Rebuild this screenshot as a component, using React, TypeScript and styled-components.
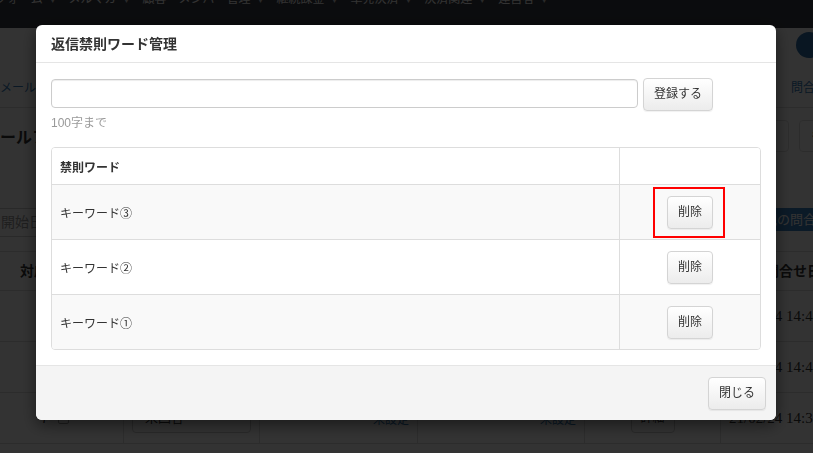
import React from "react";
import styled, { createGlobalStyle } from "styled-components";

const GlobalStyle = createGlobalStyle`
  html, body { margin: 0; padding: 0; }
  body {
    width: 813px;
    height: 453px;
    overflow: hidden;
    background: #fff;
    font-family: "Liberation Sans", "Noto Sans CJK JP", sans-serif;
    font-size: 12px;
    color: #333;
  }
  * { box-sizing: border-box; }
`;

/* ---------- underlying page ---------- */

const Page = styled.div`
  width: 880px;
  display: flex;
  flex-direction: column;
`;

const NavBar = styled.nav`
  height: 28px;
  background: #3a3d45;
  overflow: hidden;
`;

const NavList = styled.ul`
  list-style: none;
  margin: -8px 0 0 -5px;
  padding: 0;
  display: flex;
  color: #fff;
  font-size: 12px;
  line-height: 14px;
`;

const NavItem = styled.li`
  padding-right: 12px;
  white-space: nowrap;
`;

const Caret = styled.span`
  margin-left: 6px;
  font-size: 8px;
  color: #ccc;
`;

const TopTools = styled.div`
  height: 80px;
  border-bottom: 1px solid #ddd;
  display: flex;
  align-items: flex-end;
  padding: 0 53px 11px 0;
`;

const TabLink = styled.a`
  color: #337ab7;
  font-size: 12px;
  line-height: 16px;
`;

const Spacer = styled.div`
  flex: 1;
`;

const ToolIcon = styled.div`
  display: flex;
  flex-direction: column;
  align-items: center;
  gap: 22px;
  width: 36px;
`;

const Circle = styled.div`
  width: 26px;
  height: 26px;
  border-radius: 50%;
  background: #2f6ea8;
`;

const ToolLabel = styled.span`
  color: #337ab7;
  font-size: 12px;
  line-height: 16px;
  white-space: nowrap;
`;

const TitleRow = styled.div`
  height: 100px;
  display: flex;
  align-items: flex-start;
  padding-top: 12px;
  margin-left: -16px;
  gap: 10px;
  padding-right: 3px;
`;

const PageTitle = styled.h1`
  margin: 0;
  font-size: 16px;
  line-height: 36px;
  font-weight: bold;
  color: #333;
`;

const PageBtn = styled.div`
  height: 32px;
  padding: 0 12px;
  border: 1px solid #ddd;
  border-radius: 4px;
  font-size: 13px;
  font-weight: bold;
  line-height: 30px;
  color: #333;
  white-space: nowrap;
`;

const FilterRow = styled.div`
  height: 43px;
  display: flex;
  align-items: flex-start;
  margin-left: -40px;
  padding-right: 31px;
`;

const DateInput = styled.div`
  width: 120px;
  height: 29px;
  border: 1px solid #ccc;
  border-radius: 4px;
  color: #999;
  font-size: 14px;
  line-height: 27px;
  padding-left: 40px;
  white-space: nowrap;
`;

const PrimaryBtn = styled.div`
  height: 23px;
  padding: 0 20px;
  background: #3a80c0;
  color: #fff;
  border-radius: 3px;
  font-size: 13px;
  line-height: 23px;
  white-space: nowrap;
`;

const DataTable = styled.div`
  display: grid;
  grid-template-columns: 123px 136px 158px 167px 136px 160px;
  border-top: 1px solid #ddd;
`;

const HeadCell = styled.div<{ $center?: boolean }>`
  height: 39px;
  border-bottom: 1px solid #ddd;
  font-weight: bold;
  font-size: 14px;
  line-height: 38px;
  padding-left: ${(p) => (p.$center ? "0" : "20px")};
  text-align: ${(p) => (p.$center ? "center" : "left")};
  white-space: nowrap;
`;

const Cell = styled.div<{ $align?: string }>`
  height: 51px;
  border-bottom: 1px solid #ddd;
  border-left: 1px solid #ddd;
  display: flex;
  align-items: center;
  justify-content: ${(p) => p.$align || "flex-start"};
  padding: 0 8px;
  white-space: nowrap;
`;

const NumCell = styled(Cell)`
  border-left: none;
  padding-left: 41px;
  gap: 10px;
  font-size: 13px;
`;

const Check = styled.span`
  width: 11px;
  height: 11px;
  border: 1px solid #999;
  border-radius: 2px;
`;

const StatusSelect = styled.div`
  width: 119px;
  height: 30px;
  border: 1px solid #ccc;
  border-radius: 4px;
  padding-left: 12px;
  line-height: 28px;
  font-size: 13px;
`;

const UnsetLink = styled.a`
  color: #337ab7;
  font-size: 12px;
`;

const SmallBtn = styled.div`
  width: 44px;
  height: 30px;
  border: 1px solid #ccc;
  border-radius: 4px;
  text-align: center;
  line-height: 28px;
  font-size: 12px;
`;

const DateText = styled.span`
  font-family: "Liberation Serif", serif;
  font-size: 15px;
`;

/* ---------- modal ---------- */

const Backdrop = styled.div`
  position: fixed;
  inset: 0;
  background: rgba(0, 0, 0, 0.8);
`;

const ModalLayer = styled.div`
  position: fixed;
  inset: 0;
`;

const Dialog = styled.div`
  width: 740px;
  margin: 25px 0 0 36px;
  background: #fff;
  border-radius: 6px;
  box-shadow: 0 5px 15px rgba(0, 0, 0, 0.5);
  overflow: hidden;
`;

const DialogHeader = styled.div`
  height: 38px;
  border-bottom: 1px solid #e5e5e5;
  padding: 0 15px;
  display: flex;
  align-items: center;
`;

const DialogTitle = styled.h4`
  margin: 0;
  font-size: 14px;
  font-weight: bold;
  line-height: 20px;
  color: #333;
`;

const DialogBody = styled.div`
  padding: 15px 15px 15px;
`;

const FormRow = styled.div`
  display: flex;
  align-items: flex-start;
  gap: 5px;
`;

const WordInput = styled.input`
  width: 587px;
  height: 29px;
  margin-top: 1px;
  border: 1px solid #ccc;
  border-radius: 4px;
  box-shadow: inset 0 1px 1px rgba(0, 0, 0, 0.075);
  padding: 0 8px;
  font: inherit;
  outline: none;
`;

const Btn = styled.button`
  height: 33px;
  padding: 0 10px;
  font-family: inherit;
  font-size: 12px;
  line-height: 31px;
  color: #333;
  background: linear-gradient(to bottom, #ffffff 0%, #ececec 100%);
  border: 1px solid #d4d4d4;
  border-radius: 4px;
  box-shadow: inset 0 1px 0 rgba(255, 255, 255, 0.15), 0 1px 1px rgba(0, 0, 0, 0.06);
  white-space: nowrap;
  cursor: pointer;
`;

const HelpText = styled.div`
  margin-top: 4px;
  font-size: 12px;
  line-height: 16px;
  color: #999;
`;

const WordTable = styled.div`
  margin-top: 16px;
  border: 1px solid #ddd;
  border-radius: 4px;
  overflow: hidden;
`;

const WordRow = styled.div<{ $striped?: boolean; $head?: boolean }>`
  display: grid;
  grid-template-columns: 1fr 141px;
  height: ${(p) => (p.$head ? "36px" : "55px")};
  background: ${(p) => (p.$striped ? "#f9f9f9" : "#fff")};
  border-top: ${(p) => (p.$head ? "none" : "1px solid #ddd")};
`;

const WordCell = styled.div<{ $head?: boolean }>`
  display: flex;
  align-items: center;
  padding-left: 8px;
  font-size: 12px;
  font-weight: ${(p) => (p.$head ? "bold" : "normal")};
  color: #333;
`;

const ActionCell = styled.div`
  border-left: 1px solid #ddd;
  display: flex;
  align-items: center;
  justify-content: center;
`;

const Highlight = styled.div`
  border: 2px solid #ff0000;
  padding: 7px 10px 7px 12px;
  margin-left: -2px;
`;

const DialogFooter = styled.div`
  border-top: 1px solid #e5e5e5;
  background: #f4f4f4;
  padding: 11px 10px 10px;
  display: flex;
  justify-content: flex-end;
`;

const navItems = ["フォーム", "メルマガ", "顧客・メンバー管理", "継続課金", "単発決済", "決済関連", "運営者"];

const pageRows = [
  { n: "9", date: "21/02/24 14:48" },
  { n: "8", date: "21/02/24 14:42" },
  { n: "7", date: "21/02/24 14:35" },
];

const words = [
  { label: "キーワード③", highlight: true },
  { label: "キーワード②", highlight: false },
  { label: "キーワード①", highlight: false },
];

export default function App() {
  return (
    <>
      <GlobalStyle />
      <Page>
        <NavBar>
          <NavList>
            {navItems.map((t) => (
              <NavItem key={t}>
                {t}
                <Caret>▼</Caret>
              </NavItem>
            ))}
          </NavList>
        </NavBar>
        <TopTools>
          <TabLink>メールフォーム</TabLink>
          <Spacer />
          <ToolIcon>
            <Circle />
            <ToolLabel>問合せ</ToolLabel>
          </ToolIcon>
        </TopTools>
        <TitleRow>
          <PageTitle>メールフォーム一覧</PageTitle>
          <Spacer />
          <PageBtn>項目管理</PageBtn>
          <PageBtn>各種設定</PageBtn>
        </TitleRow>
        <FilterRow>
          <DateInput>開始日</DateInput>
          <Spacer />
          <PrimaryBtn>新規の問合せ</PrimaryBtn>
        </FilterRow>
        <DataTable>
          <HeadCell>対応</HeadCell>
          <HeadCell $center>状態</HeadCell>
          <HeadCell $center>担当者</HeadCell>
          <HeadCell $center>対応者</HeadCell>
          <HeadCell $center>詳細</HeadCell>
          <HeadCell $center>問合せ日時</HeadCell>
          {pageRows.map((r) => (
            <React.Fragment key={r.n}>
              <NumCell>
                {r.n}
                <Check />
              </NumCell>
              <Cell>
                <StatusSelect>未回答</StatusSelect>
              </Cell>
              <Cell $align="flex-end">
                <UnsetLink>未設定</UnsetLink>
              </Cell>
              <Cell $align="flex-end">
                <UnsetLink>未設定</UnsetLink>
              </Cell>
              <Cell $align="center">
                <SmallBtn>詳細</SmallBtn>
              </Cell>
              <Cell>
                <DateText>{r.date}</DateText>
              </Cell>
            </React.Fragment>
          ))}
        </DataTable>
      </Page>

      <Backdrop />
      <ModalLayer>
        <Dialog>
          <DialogHeader>
            <DialogTitle>返信禁則ワード管理</DialogTitle>
          </DialogHeader>
          <DialogBody>
            <FormRow>
              <WordInput type="text" />
              <Btn>登録する</Btn>
            </FormRow>
            <HelpText>100字まで</HelpText>
            <WordTable>
              <WordRow $head>
                <WordCell $head>禁則ワード</WordCell>
                <ActionCell />
              </WordRow>
              {words.map((w, i) => (
                <WordRow key={w.label} $striped={i % 2 === 0}>
                  <WordCell>{w.label}</WordCell>
                  <ActionCell>
                    {w.highlight ? (
                      <Highlight>
                        <Btn>削除</Btn>
                      </Highlight>
                    ) : (
                      <Btn>削除</Btn>
                    )}
                  </ActionCell>
                </WordRow>
              ))}
            </WordTable>
          </DialogBody>
          <DialogFooter>
            <Btn>閉じる</Btn>
          </DialogFooter>
        </Dialog>
      </ModalLayer>
    </>
  );
}
